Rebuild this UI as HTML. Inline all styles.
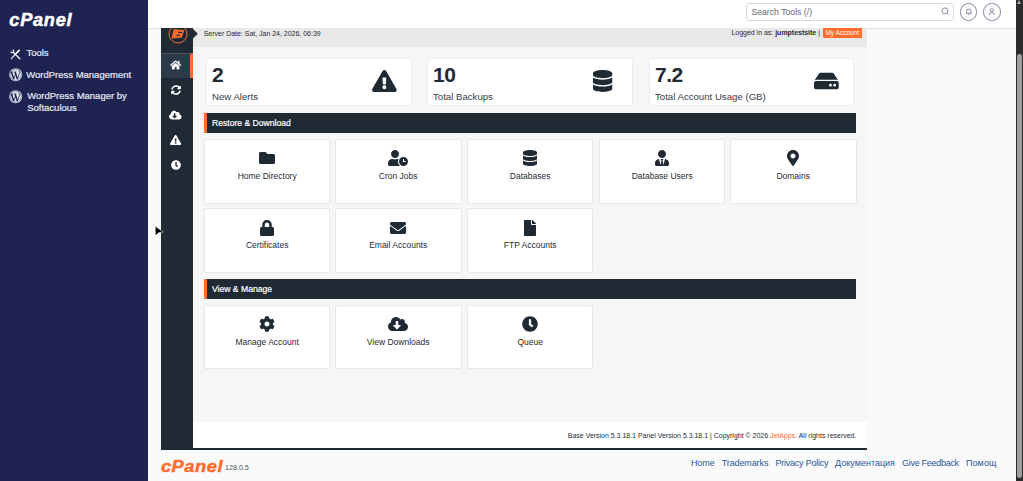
<!DOCTYPE html>
<html lang="en">
<head>
<meta charset="utf-8">
<title>cPanel - JetBackup 5</title>
<style>
*{box-sizing:border-box;margin:0;padding:0}
html,body{width:1023px;height:481px;overflow:hidden;background:#fafafa;font-family:"Liberation Sans",sans-serif;color:#1f2a35}
.abs{position:absolute}
svg{display:block;fill:#1f2a35;overflow:visible}
#nav{left:0;top:0;width:148px;height:481px;background:#1f2352}
#nav .logo{left:9.3px;top:8px;font:italic bold 18.2px/24px "Liberation Sans",sans-serif;color:#fff;letter-spacing:0.73px;-webkit-text-stroke:0.5px #fff;white-space:nowrap}
#nav .item{color:#e4e6f0;font:9.5px/12.5px "Liberation Sans",sans-serif;white-space:nowrap;-webkit-text-stroke:0.22px #e4e6f0}
#top{left:148px;top:0;width:868px;height:28px;background:#fff;box-shadow:0 1px 1px rgba(0,0,0,.08)}
#search{left:598.4px;top:3px;width:207.4px;height:17.6px;border:1px solid #d9dae0;border-radius:3px;background:#fff;font:8.7px/17.4px "Liberation Sans",sans-serif;color:#666970;padding-left:4px}
.rbtn{width:17.6px;height:17.6px;border:1px solid #8183a0;border-radius:50%;top:3px}
#sb{left:1016px;top:0;width:7px;height:481px;background:#2b2b2b}
#sb i{position:absolute;left:1px;top:53.5px;width:5px;height:424px;background:#9f9f9f;border-radius:2.5px}
#sb b{position:absolute;left:1px;top:-2px;width:0;height:0;border:2.6px solid transparent;border-bottom:4px solid #a8a8a8}
#jbside{left:161px;top:28px;width:32px;height:422px;background:#1f2a35;overflow:hidden}
#jbside .on{left:0;top:25px;width:32px;height:25px;background:#2b3b49;border-right:3px solid #ff6c2c;border-top:1px solid #46525d}
#jbside svg{fill:#fff}
#bar{left:193px;top:28px;width:674px;height:19.4px;background:#e9e9e9;font-size:6.97px;line-height:8px;color:#1f2a35;white-space:nowrap}
#jbmain{left:193px;top:47.4px;width:674px;height:375px;background:#f6f6f6}
.card{background:#fff;border:1px solid #ededed;border-radius:3px;height:48px;top:58px;width:206px}
.card b{position:absolute;left:5.1px;top:4.4px;font:bold 21px/24px "Liberation Sans",sans-serif;color:#1f2a35;letter-spacing:-0.5px}
.card span{position:absolute;left:5px;top:31.9px;font:9.65px/12px "Liberation Sans",sans-serif;color:#333d48;white-space:nowrap}
.sec{left:204px;width:652px;height:20px;background:#1f2a35;border-left:3px solid #ff6c2c;color:#fff;font:8.6px/20px "Liberation Sans",sans-serif;padding-left:5px;-webkit-text-stroke:0.2px #fff}
.tile{width:126px;height:65px;background:#fff;border:1px solid #e8e8e8;border-radius:2px}
.lbl{width:126px;text-align:center;font:8.5px/10px "Liberation Sans",sans-serif;color:#1f2a35;white-space:nowrap}
#jbfoot{left:193px;top:422px;width:674px;height:28px;background:#fff;border-bottom:2px solid #1f2a35}
#jbfoot span{right:10.6px;top:9.6px;font:6.97px/8px "Liberation Sans",sans-serif;color:#1f2a35;white-space:nowrap}
#jbfoot em{font-style:normal;color:#ff6c2c}
#foot .clogo{left:160.9px;top:454px;font:italic bold 18.3px/24px "Liberation Sans",sans-serif;color:#ff6c2c;letter-spacing:0.55px;transform:scaleY(.95);transform-origin:0 18.3px;-webkit-text-stroke:0.5px #ff6c2c;white-space:nowrap}
#foot .ver{left:224.9px;top:463.6px;font:7.2px/8px "Liberation Sans",sans-serif;color:#555}
#foot a{position:absolute;top:458px;font:9px/11px "Liberation Sans",sans-serif;color:#27589a;white-space:nowrap;text-decoration:none}
</style>
</head>
<body>

<div id="nav" class="abs">
<div class="logo abs">cPanel</div>
<svg class="abs" viewBox="0 0 20 20" style="left:10.1px;top:48.7px;width:10.4px;height:10.4px;fill:none;stroke:#f2f3f8;stroke-width:2.5;stroke-linecap:round;stroke-linejoin:round"><path d="M6.8 6.8L18.8 18.8"/><path d="M4.89 1.64A2.8 2.8 0 1 1 1.64 4.89" stroke-width="2.3" stroke-linecap="butt"/><path d="M13 7.2L2.6 18.6" stroke-width="2.3"/><path d="M17.6 2.6L13.4 6.8" stroke-width="3.4"/></svg>
<svg class="abs" viewBox="-10 -10 20 20" style="left:8.60px;top:68.40px;width:13.4px;height:13.4px"><circle r="9.7" fill="#e6e8f0"/><circle r="8.3" fill="none" stroke="#1f2352" stroke-width="0.7"/><path d="M-6.4 -3.9L-2.9 6.6M-1 -3.9L2.6 6.6" fill="none" stroke="#1f2352" stroke-width="2.3"/><path d="M-2.9 6.6L0 -1.8M2.6 6.6L5.6 -2C6.4 -4.4 5.4 -5.6 4 -5.8" fill="none" stroke="#1f2352" stroke-width="1.2"/><path d="M-7.8 -4.2H-3.6M-2.4 -4.2H1.4" stroke="#1f2352" stroke-width="1" fill="none"/></svg>
<svg class="abs" viewBox="-10 -10 20 20" style="left:9.30px;top:90.10px;width:13.4px;height:13.4px"><circle r="9.7" fill="#e6e8f0"/><circle r="8.3" fill="none" stroke="#1f2352" stroke-width="0.7"/><path d="M-6.4 -3.9L-2.9 6.6M-1 -3.9L2.6 6.6" fill="none" stroke="#1f2352" stroke-width="2.3"/><path d="M-2.9 6.6L0 -1.8M2.6 6.6L5.6 -2C6.4 -4.4 5.4 -5.6 4 -5.8" fill="none" stroke="#1f2352" stroke-width="1.2"/><path d="M-7.8 -4.2H-3.6M-2.4 -4.2H1.4" stroke="#1f2352" stroke-width="1" fill="none"/></svg>
<div class="item abs" style="left:26.4px;top:47.2px">Tools</div>
<div class="item abs" style="left:26.2px;top:68.7px">WordPress Management</div>
<div class="item abs" style="left:27.2px;top:89.7px">WordPress Manager by<br>Softaculous</div>
</div>
<div id="top" class="abs">
<div id="search" class="abs">Search Tools (/)</div>
<svg class="abs" viewBox="0 0 20 20" style="left:793px;top:7.4px;width:8.6px;height:8.6px;fill:none;stroke:#5a5d76;stroke-width:1.6"><circle cx="9" cy="9" r="7"/><path d="M14.5 14.5L18 18"/></svg>
<div class="rbtn abs" style="left:811.8px"></div>
<div class="rbtn abs" style="left:835.1px"></div>
<svg class="abs" viewBox="0 0 20 20" style="left:816.8px;top:8px;width:7.6px;height:7.6px;fill:none;stroke:#4a4d72;stroke-width:1.7"><path d="M4 14V9a6 6 0 0 1 12 0v5M2 14h16M8.5 17.5h3"/></svg>
<svg class="abs" viewBox="0 0 20 20" style="left:840.1px;top:7.8px;width:7.6px;height:7.6px;fill:none;stroke:#4a4d72;stroke-width:1.7"><circle cx="10" cy="6" r="4"/><path d="M3 19a7 7 0 0 1 14 0"/></svg>
</div>
<div id="sb" class="abs"><b></b><i></i></div>
<div id="jbside" class="abs">
<svg class="abs" viewBox="-10 -10 20 20" style="left:6.5px;top:-3.8px;width:20px;height:20px;fill:none"><circle r="9" stroke="#ff6c2c" stroke-width="1"/><path d="M-4.3 -4.8L-2.6 -4.7L-2.2 -5.4L-1 -4.6L6.3 -4.1L3.8 3.6L-6.4 4.4Z" fill="#ff6c2c" stroke="none"/><path d="M0.6 -2.4L4.4 -2.1L3.9 -0.7L0.2 -0.9ZM-1.1 0.8L2 0.7L1.5 1.9L-1.5 2Z" fill="#1f2a35" stroke="none"/></svg>
<div class="on abs"></div>
<svg class="abs" viewBox="0 0 576 512" style="left:8.88px;top:31.60px;width:11.25px;height:10.00px;fill:#fff;"><path d="M280.37 148.26L96 300.11V464a16 16 0 0 0 16 16l112.060-.290a16 16 0 0 0 15.920-16V368a16 16 0 0 1 16-16h64a16 16 0 0 1 16 16v95.640a16 16 0 0 0 16 16.050L464 480a16 16 0 0 0 16-16V300L295.670 148.260a12.190 12.190 0 0 0-15.300 0zM571.600 251.470L488 182.560V44.050a12 12 0 0 0-12-12h-56a12 12 0 0 0-12 12v72.610L318.470 43a48 48 0 0 0-61 0L4.340 251.470a12 12 0 0 0-1.600 16.900l25.500 31A12 12 0 0 0 45.150 301l235.220-193.740a12.190 12.190 0 0 1 15.300 0L530.900 301a12 12 0 0 0 16.900-1.600l25.500-31a12 12 0 0 0-1.700-16.930z"/></svg>
<svg class="abs" viewBox="0 0 512 512" style="left:9.50px;top:57.00px;width:10.00px;height:10.00px;fill:#fff;"><path d="M370.72 133.28C339.458 104.008 298.888 87.962 255.848 88c-77.458.068-144.328 53.178-162.791 126.850-1.344 5.363-6.122 9.150-11.651 9.150H24.103c-7.498 0-13.194-6.807-11.807-14.176C33.933 94.924 134.813 8 256 8c66.448 0 126.791 26.136 171.315 68.685L463.030 40.970C478.149 25.851 504 36.559 504 57.941V192c0 13.255-10.745 24-24 24H345.941c-21.382 0-32.090-25.851-16.971-40.971l41.750-41.749zM32 296h134.059c21.382 0 32.090 25.851 16.971 40.971l-41.750 41.750c31.262 29.273 71.835 45.319 114.876 45.280 77.418-.070 144.315-53.144 162.787-126.849 1.344-5.363 6.122-9.150 11.651-9.150h57.304c7.498 0 13.194 6.807 11.807 14.176C478.067 417.076 377.187 504 256 504c-66.448 0-126.791-26.136-171.315-68.685L48.970 471.030C33.851 486.149 8 475.441 8 454.059V320c0-13.255 10.745-24 24-24z"/></svg>
<svg class="abs" viewBox="0 0 640 512" style="left:8.25px;top:82.10px;width:12.50px;height:10.00px;fill:#fff;"><path d="M537.6 226.6c4.100-10.700 6.400-22.400 6.400-34.600 0-53-43-96-96-96-19.700 0-38.100 6-53.300 16.200C367 64.200 315.300 32 256 32c-88.400 0-160 71.600-160 160 0 2.700.1 5.400.2 8.100C40.200 219.800 0 273.200 0 336c0 79.500 64.500 144 144 144h368c70.700 0 128-57.300 128-128 0-61.900-44-113.600-102.400-125.400zm-132.900 88.700L299.300 420.700c-6.200 6.200-16.400 6.200-22.600 0L171.300 315.300c-10.100-10.100-2.900-27.300 11.300-27.300H248V176c0-8.800 7.200-16 16-16h48c8.800 0 16 7.200 16 16v112h65.400c14.200 0 21.400 17.200 11.300 27.300z"/></svg>
<svg class="abs" viewBox="0 0 576 512" style="left:8.88px;top:107.10px;width:11.25px;height:10.00px;fill:#fff;"><path d="M569.517 440.013C587.975 472.007 564.806 512 527.940 512H48.054c-36.937 0-59.999-40.055-41.577-71.987L246.423 23.985c18.467-32.009 64.720-31.951 83.154 0l239.940 416.028zM288 354c-25.405 0-46 20.595-46 46s20.595 46 46 46 46-20.595 46-46-20.595-46-46-46zm-43.673-165.346l7.418 136c.347 6.364 5.609 11.346 11.982 11.346h48.546c6.373 0 11.635-4.982 11.982-11.346l7.418-136c.375-6.874-5.098-12.654-11.982-12.654h-63.383c-6.884 0-12.356 5.780-11.981 12.654z"/></svg>
<svg class="abs" viewBox="0 0 512 512" style="left:9.50px;top:132.20px;width:10.00px;height:10.00px;fill:#fff;"><path d="M256 8C119 8 8 119 8 256s111 248 248 248 248-111 248-248S393 8 256 8zm57.100 350.100L224.900 294c-3.100-2.300-4.900-5.900-4.900-9.700V116c0-6.600 5.400-12 12-12h48c6.600 0 12 5.400 12 12v137.700l63.500 46.200c5.400 3.900 6.500 11.400 2.600 16.800l-28.200 38.800c-3.900 5.300-11.400 6.500-16.800 2.600z"/></svg>
</div>
<div id="bar" class="abs">
<span class="abs" style="left:10.7px;top:2.1px">Server Date: Sat, Jan 24, 2026, 06:39</span>
<span class="abs" style="right:47px;top:1.2px">Logged in as: <b>jumptestsite</b> |</span>
<span class="abs" style="left:629.5px;top:0;height:9.6px;width:39.5px;background:#ff6c2c;color:#fff;text-align:center;border-radius:0 0 1.5px 1.5px;line-height:9px;font-size:6.5px">My Account</span>
</div>
<div id="jbmain" class="abs"></div>
<svg class="abs" viewBox="0 0 5 10" style="left:193px;top:28.6px;width:4.8px;height:9.6px;fill:#1f2a35"><path d="M0 0L5 5L0 10Z"/></svg>
<div class="card abs" style="left:206px;width:206px"><b>2</b><span>New Alerts</span></div>
<svg class="abs" viewBox="0 0 576 512" style="left:371.73px;top:69.60px;width:24.75px;height:22.00px;"><path d="M569.517 440.013C587.975 472.007 564.806 512 527.940 512H48.054c-36.937 0-59.999-40.055-41.577-71.987L246.423 23.985c18.467-32.009 64.720-31.951 83.154 0l239.940 416.028zM288 354c-25.405 0-46 20.595-46 46s20.595 46 46 46 46-20.595 46-46-20.595-46-46-46zm-43.673-165.346l7.418 136c.347 6.364 5.609 11.346 11.982 11.346h48.546c6.373 0 11.635-4.982 11.982-11.346l7.418-136c.375-6.874-5.098-12.654-11.982-12.654h-63.383c-6.884 0-12.356 5.780-11.981 12.654z"/></svg>
<div class="card abs" style="left:427px;width:206px"><b>10</b><span>Total Backups</span></div>
<svg class="abs" viewBox="0 0 448 512" style="left:592.88px;top:69.60px;width:19.25px;height:22.00px;"><path d="M448 73.143v45.714C448 159.143 347.667 192 224 192S0 159.143 0 118.857V73.143C0 32.857 100.333 0 224 0s224 32.857 224 73.143zM448 176v102.857C448 319.143 347.667 352 224 352S0 319.143 0 278.857V176c48.125 33.143 136.208 48.572 224 48.572S399.874 209.143 448 176zm0 160v102.857C448 479.143 347.667 512 224 512S0 479.143 0 438.857V336c48.125 33.143 136.208 48.572 224 48.572S399.874 369.143 448 336z"/></svg>
<div class="card abs" style="left:649px;width:205px"><b>7.2</b><span>Total Account Usage (GB)</span></div>
<svg class="abs" viewBox="0 0 576 512" style="left:814.23px;top:69.60px;width:24.75px;height:22.00px;"><path d="M576 304v96c0 26.510-21.490 48-48 48H48c-26.510 0-48-21.490-48-48v-96c0-26.510 21.490-48 48-48h480c26.510 0 48 21.490 48 48zm-48-80a79.557 79.557 0 0 1 30.777 6.165L462.250 85.374A48.003 48.003 0 0 0 422.311 64H153.689a48 48 0 0 0-39.938 21.374L17.223 230.165A79.557 79.557 0 0 1 48 224h480zm-48 96c-17.673 0-32 14.327-32 32s14.327 32 32 32 32-14.327 32-32-14.327-32-32-32zm-96 0c-17.673 0-32 14.327-32 32s14.327 32 32 32 32-14.327 32-32-14.327-32-32-32z"/></svg>
<div class="sec abs" style="top:113px">Restore &amp; Download</div>
<div class="tile abs" style="left:204px;top:139px;width:126px;height:65px"></div>
<svg class="abs" viewBox="0 0 512 512" style="left:259.30px;top:150.40px;width:16.00px;height:16.00px;"><path d="M464 128H272l-64-64H48C21.49 64 0 85.49 0 112v288c0 26.51 21.49 48 48 48h416c26.51 0 48-21.49 48-48V176c0-26.51-21.49-48-48-48z"/></svg>
<div class="lbl abs" style="left:204.2px;top:171.30px">Home Directory</div>
<div class="tile abs" style="left:335px;top:139px;width:127px;height:65px"></div>
<svg class="abs" viewBox="0 0 640 512" style="left:388.30px;top:150.40px;width:20.00px;height:16.00px;"><path d="M496 224c-79.600 0-144 64.400-144 144s64.400 144 144 144 144-64.400 144-144-64.400-144-144-144zm64 150.300c0 5.300-4.400 9.700-9.700 9.700h-60.600c-5.300 0-9.700-4.400-9.700-9.700v-76.600c0-5.300 4.400-9.700 9.700-9.700h12.600c5.300 0 9.700 4.400 9.700 9.700V352h38.300c5.300 0 9.700 4.400 9.700 9.700v12.600zM320 368c0-27.800 6.700-54.100 18.200-77.500-8-1.500-16.200-2.500-24.600-2.500h-16.700c-22.200 10.200-46.900 16-72.900 16s-50.600-5.800-72.900-16h-16.700C60.200 288 0 348.200 0 422.400V464c0 26.500 21.500 48 48 48h347.100c-45.300-31.900-75.100-84.500-75.100-144zm-96-112c70.700 0 128-57.300 128-128S294.700 0 224 0 96 57.300 96 128s57.300 128 128 128z"/></svg>
<div class="lbl abs" style="left:335.2px;top:171.30px">Cron Jobs</div>
<div class="tile abs" style="left:467px;top:139px;width:126px;height:65px"></div>
<svg class="abs" viewBox="0 0 448 512" style="left:523.30px;top:150.40px;width:14.00px;height:16.00px;"><path d="M448 73.143v45.714C448 159.143 347.667 192 224 192S0 159.143 0 118.857V73.143C0 32.857 100.333 0 224 0s224 32.857 224 73.143zM448 176v102.857C448 319.143 347.667 352 224 352S0 319.143 0 278.857V176c48.125 33.143 136.208 48.572 224 48.572S399.874 209.143 448 176zm0 160v102.857C448 479.143 347.667 512 224 512S0 479.143 0 438.857V336c48.125 33.143 136.208 48.572 224 48.572S399.874 369.143 448 336z"/></svg>
<div class="lbl abs" style="left:467.2px;top:171.30px">Databases</div>
<div class="tile abs" style="left:599px;top:139px;width:126px;height:65px"></div>
<svg class="abs" viewBox="0 0 448 512" style="left:655.30px;top:150.40px;width:14.00px;height:16.00px;"><path d="M224 256c70.700 0 128-57.300 128-128S294.700 0 224 0 96 57.300 96 128s57.300 128 128 128zm95.800 32.600L272 480l-32-136 32-56h-96l32 56-32 136-47.800-191.400C56.900 292 0 350.300 0 422.400V464c0 26.500 21.500 48 48 48h352c26.500 0 48-21.500 48-48v-41.600c0-72.100-56.900-130.400-128.200-133.800z"/></svg>
<div class="lbl abs" style="left:599.2px;top:171.30px">Database Users</div>
<div class="tile abs" style="left:730px;top:139px;width:127px;height:65px"></div>
<svg class="abs" viewBox="0 0 384 512" style="left:787.30px;top:150.40px;width:12.00px;height:16.00px;"><path d="M172.268 501.670C26.970 291.031 0 269.413 0 192 0 85.961 85.961 0 192 0s192 85.961 192 192c0 77.413-26.970 99.031-172.268 309.670-9.535 13.774-29.930 13.773-39.464 0zM192 272c44.183 0 80-35.817 80-80s-35.817-80-80-80-80 35.817-80 80 35.817 80 80 80z"/></svg>
<div class="lbl abs" style="left:730.2px;top:171.30px">Domains</div>
<div class="tile abs" style="left:204px;top:208px;width:126px;height:65px"></div>
<svg class="abs" viewBox="0 0 448 512" style="left:260.30px;top:219.80px;width:14.00px;height:16.00px;"><path d="M400 224h-24v-72C376 68.2 307.8 0 224 0S72 68.2 72 152v72H48c-26.5 0-48 21.5-48 48v192c0 26.5 21.5 48 48 48h352c26.5 0 48-21.5 48-48V272c0-26.5-21.5-48-48-48zm-104 0H152v-72c0-39.7 32.3-72 72-72s72 32.3 72 72v72z"/></svg>
<div class="lbl abs" style="left:204.2px;top:240.30px">Certificates</div>
<div class="tile abs" style="left:335px;top:208px;width:127px;height:65px"></div>
<svg class="abs" viewBox="0 0 512 512" style="left:390.30px;top:219.80px;width:16.00px;height:16.00px;"><path d="M502.3 190.8c3.9-3.1 9.7-.2 9.7 4.7V400c0 26.5-21.5 48-48 48H48c-26.5 0-48-21.5-48-48V195.600c0-5 5.7-7.800 9.7-4.700 22.4 17.4 52.100 39.500 154.100 113.600 21.100 15.400 56.700 47.800 92.200 47.600 35.700.3 72-32.800 92.300-47.600 102-74.100 131.600-96.300 154-113.700zM256 320c23.200.4 56.600-29.200 73.400-41.400 132.700-96.300 142.800-104.700 173.400-128.700 5.800-4.500 9.200-11.500 9.200-18.900v-19c0-26.500-21.500-48-48-48H48C21.500 64 0 85.500 0 112v19c0 7.400 3.400 14.300 9.200 18.900 30.600 23.900 40.700 32.400 173.400 128.700 16.800 12.200 50.200 41.800 73.400 41.400z"/></svg>
<div class="lbl abs" style="left:335.2px;top:240.30px">Email Accounts</div>
<div class="tile abs" style="left:467px;top:208px;width:126px;height:65px"></div>
<svg class="abs" viewBox="0 0 384 512" style="left:524.30px;top:219.80px;width:12.00px;height:16.00px;"><path d="M224 136V0H24C10.7 0 0 10.7 0 24v464c0 13.300 10.700 24 24 24h336c13.300 0 24-10.700 24-24V160H248c-13.200 0-24-10.800-24-24zm160-14.100v6.100H256V0h6.100c6.400 0 12.500 2.500 17 7l97.900 98c4.500 4.500 7 10.600 7 16.900z"/></svg>
<div class="lbl abs" style="left:467.2px;top:240.30px">FTP Accounts</div>
<div class="sec abs" style="top:279px">View &amp; Manage</div>
<div class="tile abs" style="left:204px;top:305px;width:126px;height:64px"></div>
<svg class="abs" viewBox="0 0 512 512" style="left:259.30px;top:316.00px;width:16.00px;height:16.00px;"><path d="M487.4 315.7l-42.600-24.600c4.300-23.200 4.300-47 0-70.200l42.600-24.600c4.900-2.800 7.100-8.600 5.500-14-11.100-35.600-30-67.800-54.700-94.600-3.800-4.100-10-5.100-14.800-2.300L380.800 110c-17.900-15.400-38.500-27.300-60.800-35.100V25.800c0-5.600-3.900-10.500-9.400-11.700-36.700-8.200-74.300-7.800-109.200 0-5.500 1.200-9.400 6.100-9.400 11.700V75c-22.200 7.900-42.800 19.800-60.800 35.100L88.700 85.500c-4.900-2.800-11-1.900-14.800 2.300-24.700 26.700-43.600 58.900-54.700 94.600-1.700 5.400.6 11.200 5.500 14L67.300 221c-4.300 23.200-4.300 47 0 70.200l-42.600 24.600c-4.900 2.800-7.100 8.600-5.500 14 11.100 35.600 30 67.800 54.700 94.600 3.800 4.100 10 5.100 14.800 2.300l42.600-24.600c17.900 15.400 38.500 27.300 60.800 35.100v49.200c0 5.600 3.900 10.500 9.400 11.700 36.700 8.200 74.300 7.800 109.200 0 5.500-1.200 9.400-6.100 9.400-11.700v-49.200c22.200-7.900 42.800-19.800 60.800-35.100l42.600 24.600c4.900 2.800 11 1.900 14.800-2.300 24.700-26.700 43.600-58.900 54.700-94.600 1.500-5.500-.7-11.300-5.600-14.100zM256 336c-44.100 0-80-35.900-80-80s35.900-80 80-80 80 35.900 80 80-35.900 80-80 80z"/></svg>
<div class="lbl abs" style="left:204.2px;top:337.30px">Manage Account</div>
<div class="tile abs" style="left:335px;top:305px;width:127px;height:64px"></div>
<svg class="abs" viewBox="0 0 640 512" style="left:388.30px;top:316.00px;width:20.00px;height:16.00px;"><path d="M537.6 226.6c4.100-10.700 6.400-22.400 6.400-34.600 0-53-43-96-96-96-19.700 0-38.100 6-53.300 16.200C367 64.200 315.300 32 256 32c-88.400 0-160 71.600-160 160 0 2.700.1 5.400.2 8.100C40.200 219.800 0 273.200 0 336c0 79.500 64.500 144 144 144h368c70.700 0 128-57.300 128-128 0-61.900-44-113.600-102.400-125.400zm-132.900 88.700L299.300 420.700c-6.200 6.200-16.400 6.200-22.600 0L171.300 315.300c-10.100-10.100-2.900-27.300 11.300-27.300H248V176c0-8.800 7.200-16 16-16h48c8.800 0 16 7.200 16 16v112h65.400c14.200 0 21.400 17.200 11.300 27.300z"/></svg>
<div class="lbl abs" style="left:335.2px;top:337.30px">View Downloads</div>
<div class="tile abs" style="left:467px;top:305px;width:126px;height:64px"></div>
<svg class="abs" viewBox="0 0 512 512" style="left:522.30px;top:316.00px;width:16.00px;height:16.00px;"><path d="M256 8C119 8 8 119 8 256s111 248 248 248 248-111 248-248S393 8 256 8zm57.100 350.100L224.900 294c-3.100-2.300-4.900-5.900-4.900-9.700V116c0-6.600 5.400-12 12-12h48c6.600 0 12 5.400 12 12v137.700l63.500 46.200c5.400 3.900 6.500 11.400 2.600 16.800l-28.200 38.800c-3.900 5.300-11.400 6.500-16.800 2.600z"/></svg>
<div class="lbl abs" style="left:467.2px;top:337.30px">Queue</div>
<div id="jbfoot" class="abs"><span class="abs">Base Version 5.3.18.1 Panel Version 5.3.18.1 | Copyright © 2026 <em>JetApps</em>. All rights reserved.</span></div>
<svg class="abs" viewBox="0 0 10 10" style="left:155px;top:225.7px;width:10px;height:10px;fill:#000;stroke:#f4f4f4;stroke-width:0.5;stroke-linejoin:round"><path d="M0.3 0.3L8.4 6L3.6 6.7L0.3 9.5Z"/></svg>
<div id="foot">
<div class="clogo abs">cPanel</div>
<div class="ver abs">128.0.5</div>
<a style="left:690.9px;letter-spacing:-0.055px">Home</a>
<a style="left:721.7px;letter-spacing:-0.109px">Trademarks</a>
<a style="left:775.5px;letter-spacing:-0.230px">Privacy Policy</a>
<a style="left:835.1px;letter-spacing:0.001px">Документация</a>
<a style="left:902.1px;letter-spacing:-0.295px">Give Feedback</a>
<a style="left:965.9px;letter-spacing:0.124px">Помощ</a>
</div>
</body>
</html>
